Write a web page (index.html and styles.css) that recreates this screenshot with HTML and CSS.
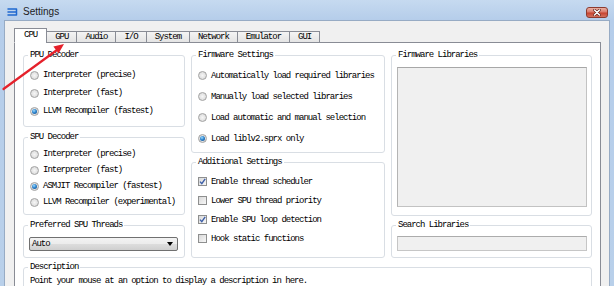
FILE: index.html
```html
<!DOCTYPE html>
<html>
<head>
<meta charset="utf-8">
<title>Settings</title>
<link rel="stylesheet" href="styles.css">
</head>
<body>
<div class="window">
  <div class="titlebar">
    <svg class="app-icon" width="11" height="8" viewBox="0 0 11 8"><path d="M1 1H9.5M1 4H9.5M1 7H9.5M9.5 1V7" stroke="#1f68cf" stroke-width="1.5" fill="none" stroke-linecap="round"/></svg>
    <span class="title">Settings</span>
    <div class="close"><svg width="10" height="7" viewBox="0 0 10 7"><path d="M2.5 1L7.5 6M7.5 1L2.5 6" stroke="#5a2018" stroke-width="2.6" stroke-linecap="round"/><path d="M2.5 1L7.5 6M7.5 1L2.5 6" stroke="#fff" stroke-width="1.5" stroke-linecap="round"/></svg></div>
  </div>
  <div class="client">
    <div class="tabs">
      <div class="tab active">CPU</div>
      <div class="tab">GPU</div>
      <div class="tab">Audio</div>
      <div class="tab">I/O</div>
      <div class="tab">System</div>
      <div class="tab">Network</div>
      <div class="tab">Emulator</div>
      <div class="tab">GUI</div>
    </div>
    <div class="pane">
      <div class="columns">
        <div class="col">
          <div class="group g-ppu">
            <span class="group-title">PPU Decoder</span>
            <div class="rows r-ppu">
              <div class="opt"><span class="radio"></span>Interpreter (precise)</div>
              <div class="opt"><span class="radio"></span>Interpreter (fast)</div>
              <div class="opt"><span class="radio on"></span>LLVM Recompiler (fastest)</div>
            </div>
          </div>
          <div class="group g-spu">
            <span class="group-title">SPU Decoder</span>
            <div class="rows r-spu">
              <div class="opt"><span class="radio"></span>Interpreter (precise)</div>
              <div class="opt"><span class="radio"></span>Interpreter (fast)</div>
              <div class="opt"><span class="radio on"></span>ASMJIT Recompiler (fastest)</div>
              <div class="opt"><span class="radio"></span>LLVM Recompiler (experimental)</div>
            </div>
          </div>
          <div class="group g-small">
            <span class="group-title">Preferred SPU Threads</span>
            <div class="combo"><span>Auto</span><svg width="6" height="4" viewBox="0 0 6 4"><path d="M0 0H6L3 4Z" fill="#000"/></svg></div>
          </div>
        </div>
        <div class="col col-tight">
          <div class="group g-fw">
            <span class="group-title">Firmware Settings</span>
            <div class="rows r-fw">
              <div class="opt"><span class="radio"></span>Automatically load required libraries</div>
              <div class="opt"><span class="radio"></span>Manually load selected libraries</div>
              <div class="opt"><span class="radio"></span>Load automatic and manual selection</div>
              <div class="opt"><span class="radio on"></span>Load liblv2.sprx only</div>
            </div>
          </div>
          <div class="group g-add">
            <span class="group-title">Additional Settings</span>
            <div class="rows r-add">
              <div class="opt"><span class="check on"><svg width="7" height="7" viewBox="0 0 7 7"><path d="M1 3.6L2.8 5.6L6.2 0.8" stroke="#3d5fa8" stroke-width="1.4" fill="none"/></svg></span>Enable thread scheduler</div>
              <div class="opt"><span class="check"></span>Lower SPU thread priority</div>
              <div class="opt"><span class="check on"><svg width="7" height="7" viewBox="0 0 7 7"><path d="M1 3.6L2.8 5.6L6.2 0.8" stroke="#3d5fa8" stroke-width="1.4" fill="none"/></svg></span>Enable SPU loop detection</div>
              <div class="opt"><span class="check"></span>Hook static functions</div>
            </div>
          </div>
        </div>
        <div class="col col-tight">
          <div class="group g-lib">
            <span class="group-title">Firmware Libraries</span>
            <div class="listbox"></div>
          </div>
          <div class="group g-small">
            <span class="group-title">Search Libraries</span>
            <div class="search"></div>
          </div>
        </div>
      </div>
      <div class="group g-desc">
        <span class="group-title">Description</span>
        <div class="desc-text">Point your mouse at an option to display a description in here.</div>
      </div>
    </div>
  </div>
  <svg class="arrow" width="614" height="286" viewBox="0 0 614 286">
    <path d="M3.5 89L57 50" stroke="#e5212b" stroke-width="2.2" stroke-linecap="round"/>
    <path d="M64 44L58.6 53.4L53.4 46.4Z" fill="#e5212b"/>
  </svg>
</div>
</body>
</html>
```
FILE: styles.css
```css
* { box-sizing: border-box; }
html, body { margin: 0; padding: 0; }
body {
  width: 614px;
  height: 286px;
  overflow: hidden;
  background: #b9d0ea;
  font-family: "Liberation Mono", "DejaVu Sans Mono", monospace;
  font-size: 9px;
  letter-spacing: -1px;
  color: #000;
}
.window {
  position: relative;
  display: flex;
  flex-direction: column;
  height: 286px;
  overflow: hidden;
  padding: 0 4px;
  background: linear-gradient(180deg, #c6daf0 0, #b5cdea 20px, #b9d0ea 100%);
}
.titlebar {
  flex: none;
  height: 20px;
  padding-top: 3px;
  display: flex;
  align-items: center;
}
.app-icon { margin-left: 3px; flex: none; }
.title {
  margin-left: 5px;
  font-family: "Liberation Sans", Arial, sans-serif;
  font-size: 10px;
  letter-spacing: 0;
  color: #1c1c1c;
}
.close {
  margin-left: auto;
  margin-right: 2px;
  align-self: flex-start;
  margin-top: 4px;
  width: 22px;
  height: 11px;
  border: 1px solid #8c3b2f;
  border-radius: 3px;
  background: linear-gradient(180deg, #eab0a3 0, #d9796a 45%, #c7432f 55%, #d2715f 100%);
  display: flex;
  align-items: center;
  justify-content: center;
}
.client {
  flex: 1;
  min-height: 0;
  overflow: hidden;
  display: flex;
  flex-direction: column;
  background: #f0f0f0;
  border: 1px solid #97abc4;
  border-bottom: none;
  padding: 7px 8px 0 9px;
}
.tabs {
  display: flex;
  align-items: flex-end;
  height: 15px;
  flex: none;
  margin-bottom: -1px;
  position: relative;
  z-index: 1;
}
.tab {
  height: 12px;
  padding: 0 8px;
  margin-left: -1px;
  border: 1px solid #898c95;
  background: linear-gradient(180deg, #f4f4f4 0, #e4e4e4 100%);
  line-height: 10px;
  text-align: center;
  white-space: nowrap;
}
.tab:first-child { margin-left: 0; }
.tab.active {
  height: 15px;
  line-height: 12px;
  background: #fff;
  border-bottom-color: #fff;
  padding: 0 9px;
}
.pane {
  flex: 1;
  min-height: 0;
  overflow: hidden;
  background: #fff;
  border: 1px solid #898c95;
  border-bottom: none;
  padding: 12px 8px 0 8px;
}
.columns {
  display: grid;
  grid-template-columns: 162px 194px 201px;
  column-gap: 6px;
}
.col { display: flex; flex-direction: column; gap: 10px; }
.col-tight { gap: 9px; }
.group {
  border: 1px solid #d9dee4;
  border-radius: 3px;
  display: flex;
  flex-direction: column;
}
.group-title {
  align-self: flex-start;
  margin: -5px 0 0 4px;
  padding: 0 2px;
  height: 9px;
  line-height: 9px;
  background: #fff;
  white-space: nowrap;
}
.g-ppu { height: 72px; }
.g-spu { height: 78px; }
.g-small { height: 33px; }
.g-fw { height: 98px; }
.g-add { height: 96px; }
.g-lib { height: 161px; }
.g-desc { margin-top: 9px; height: 30px; }

.rows { display: flex; flex-direction: column; padding-left: 6px; }
.opt { display: flex; align-items: center; gap: 4px; white-space: nowrap; }
.r-ppu { margin-top: 6px; }
.r-ppu .opt { height: 18px; }
.r-spu { margin-top: 4px; }
.r-spu .opt { height: 16px; }
.r-fw { margin-top: 5px; }
.r-fw .opt { height: 21px; }
.r-add { margin-top: 5px; }
.r-add .opt { height: 19px; }

.radio {
  flex: none;
  width: 9px;
  height: 9px;
  border-radius: 50%;
  border: 1px solid #a2a2a2;
  background: radial-gradient(circle at 50% 50%, #f6f6f6 0, #e2e2e2 60%, #cfcfcf 100%);
  display: flex;
  align-items: center;
  justify-content: center;
}
.radio.on::after {
  content: "";
  width: 5px;
  height: 5px;
  border-radius: 50%;
  background: radial-gradient(circle at 40% 35%, #9fdcff 0, #2f86cf 45%, #0f427f 100%);
}
.check {
  flex: none;
  width: 9px;
  height: 9px;
  border: 1px solid #8e8f8f;
  background: linear-gradient(135deg, #d9d9d9 0, #f7f7f7 100%);
  display: flex;
  align-items: center;
  justify-content: center;
}
.combo {
  margin: 7px 6px 0 5px;
  height: 14px;
  border: 1px solid #707070;
  border-radius: 2px;
  background: linear-gradient(180deg, #f3f3f3 0, #ebebeb 50%, #dddddd 50%, #cfcfcf 100%);
  display: flex;
  align-items: center;
  justify-content: space-between;
  padding: 0 4px 0 2px;
}
.listbox {
  margin: 7px 4px 0 5px;
  height: 140px;
  border: 1px solid #c2c2c2;
  border-top-color: #a7a7a7;
  border-left-color: #b4b4b4;
  background: #f0f0f0;
}
.search {
  margin: 6px 4px 0 5px;
  height: 15px;
  border: 1px solid #c6c6c6;
  border-top-color: #acacac;
  background: #f0f0f0;
}
.desc-text {
  margin: 5px 0 0 6px;
  height: 9px;
  line-height: 9px;
  white-space: nowrap;
}
.arrow {
  position: absolute;
  left: 0;
  top: 0;
  pointer-events: none;
}
```
